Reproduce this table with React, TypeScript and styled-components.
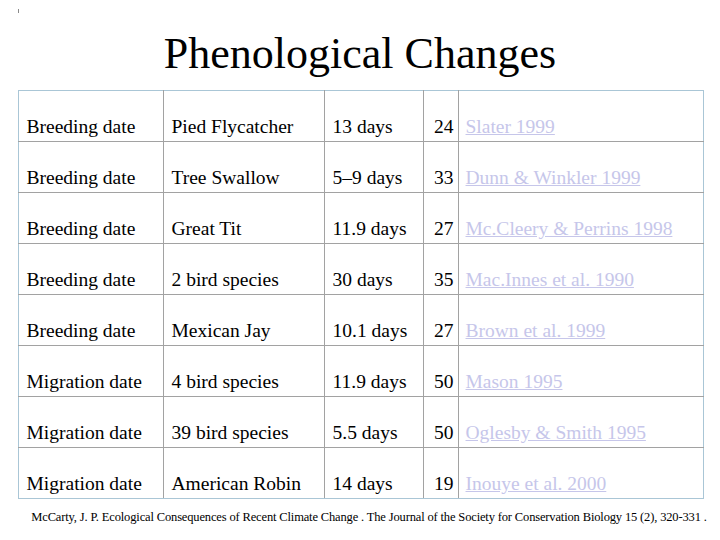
import * as React from 'react'
import styled, { createGlobalStyle } from 'styled-components'

interface Row {
  kind: string
  species: string
  shift: string
  years: number
  source: string
}

const rows: Row[] = [
  { kind: 'Breeding date', species: 'Pied Flycatcher', shift: '13 days', years: 24, source: 'Slater 1999' },
  { kind: 'Breeding date', species: 'Tree Swallow', shift: '5–9 days', years: 33, source: 'Dunn & Winkler 1999' },
  { kind: 'Breeding date', species: 'Great Tit', shift: '11.9 days', years: 27, source: 'Mc.Cleery & Perrins 1998' },
  { kind: 'Breeding date', species: '2 bird species', shift: '30 days', years: 35, source: 'Mac.Innes et al. 1990' },
  { kind: 'Breeding date', species: 'Mexican Jay', shift: '10.1 days', years: 27, source: 'Brown et al. 1999' },
  { kind: 'Migration date', species: '4 bird species', shift: '11.9 days', years: 50, source: 'Mason 1995' },
  { kind: 'Migration date', species: '39 bird species', shift: '5.5 days', years: 50, source: 'Oglesby & Smith 1995' },
  { kind: 'Migration date', species: 'American Robin', shift: '14 days', years: 19, source: 'Inouye et al. 2000' },
]

const widths = [145, 161, 99, 35, 245]

export default function App() {
  return (
    <>
      <GlobalStyle />
      <Slide>
        <Mark />
        <Title>Phenological Changes</Title>
        <Table>
          <colgroup>
            {widths.map((w, i) => (
              <col key={i} style={{ width: w }} />
            ))}
          </colgroup>
          <tbody>
            {rows.map((r, i) => (
              <tr key={i}>
                <Cell>{r.kind}</Cell>
                <Cell>{r.species}</Cell>
                <Cell>{r.shift}</Cell>
                <Cell $align="right">{r.years}</Cell>
                <Cell>
                  <Source href="#">{r.source}</Source>
                </Cell>
              </tr>
            ))}
          </tbody>
        </Table>
        <Citation>
          McCarty, J. P. Ecological Consequences of Recent Climate Change . The Journal of the Society for Conservation Biology 15 (2), 320-331 .
        </Citation>
      </Slide>
    </>
  )
}

const GlobalStyle = createGlobalStyle`
  body {
    margin: 0;
    background: #ffffff;
    font-family: "Liberation Serif", "Times New Roman", serif;
    color: #000;
  }
`

const Slide = styled('div')`
  position: relative;
  width: 720px;
  height: 540px;
  display: flex;
  flex-direction: column;
  align-items: center;
  overflow: hidden;
  & > * {
    flex-shrink: 0;
  }
`

const Mark = styled('span')`
  position: absolute;
  left: 18px;
  top: 9px;
  width: 1px;
  height: 4px;
  background: #8a8a8a;
`

const Title = styled('h1')`
  margin: 31px 0 0;
  height: 59px;
  font-size: 44px;
  font-weight: normal;
  line-height: 46px;
  letter-spacing: 0;
`

const Table = styled('table')`
  margin-left: 1px;
  border-collapse: collapse;
  table-layout: fixed;
  width: 685px;
  border: 1px solid #aac6d6;
`

const Cell = styled('td')<{ $align?: string }>`
  height: 47px;
  padding: 0 4px 3px 8px;
  border: 1px solid #a2a2a2;
  vertical-align: bottom;
  text-align: ${p => p.$align || 'left'};
  font-size: 19.5px;
  line-height: 22px;
  white-space: nowrap;
  tr:first-child > & {
    border-top-color: #aac6d6;
  }
  tr:last-child > & {
    border-bottom-color: #aac6d6;
  }
  &:first-child {
    border-left-color: #aac6d6;
  }
  &:last-child {
    border-right-color: #aac6d6;
    padding-left: 7px;
  }
`

const Source = styled('a')`
  color: #c6c6ea;
  text-decoration: underline;
  text-decoration-color: #c6c6ea;
`

const Citation = styled('p')`
  margin: 11px 0 0 18px;
  font-size: 12.5px;
  line-height: 15px;
  letter-spacing: -0.15px;
  white-space: nowrap;
`
